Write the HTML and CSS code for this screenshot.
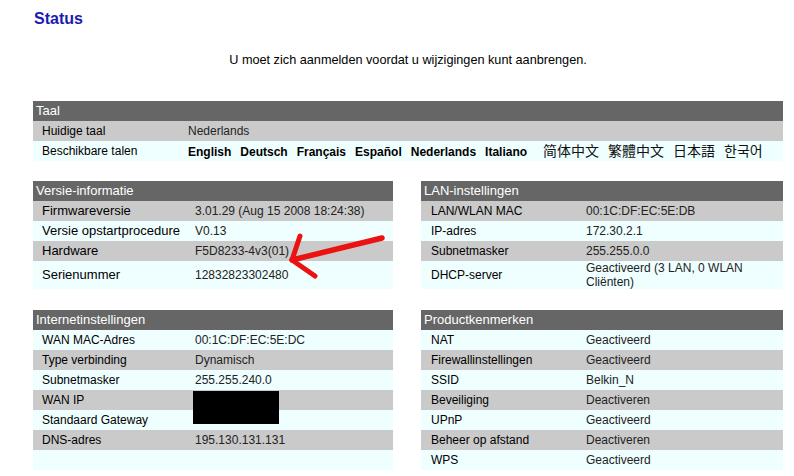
FILE: index.html
```html
<!DOCTYPE html>
<html lang="nl">
<head>
    <meta charset="UTF-8">
    <title>Status</title>
    <link rel="stylesheet" href="styles.css">
</head>
<body>

<div class="page">
    <h1 class="title">Status</h1>
    <p class="notice">U moet zich aanmelden voordat u wijzigingen kunt aanbrengen.</p>

    <table class="info info--lang">
        <tr><th colspan="2">Taal</th></tr>
        <tr class="alt"><td class="k">Huidige taal</td><td>Nederlands</td></tr>
        <tr>
            <td class="k">Beschikbare talen</td>
            <td>
                <div class="langs">
                    <b>English</b>
                    <b>Deutsch</b>
                    <b>Français</b>
                    <b>Español</b>
                    <b>Nederlands</b>
                    <b>Italiano</b>
                    <span class="cjk sc">简体中文</span>
                    <span class="cjk tc">繁體中文</span>
                    <span class="cjk jp">日本語</span>
                    <span class="cjk kr">한국어</span>
                </div>
            </td>
        </tr>
    </table>

    <div class="grid">
        <table class="info info--big">
            <tr><th colspan="2">Versie-informatie</th></tr>
            <tr class="alt"><td class="k">Firmwareversie</td><td>3.01.29 (Aug 15 2008 18:24:38)</td></tr>
            <tr><td class="k">Versie opstartprocedure</td><td>V0.13</td></tr>
            <tr class="alt"><td class="k">Hardware</td><td>F5D8233-4v3(01)</td></tr>
            <tr class="tall"><td class="k">Serienummer</td><td>12832823302480</td></tr>
        </table>

        <table class="info info--right">
            <tr><th colspan="2">LAN-instellingen</th></tr>
            <tr class="alt"><td class="k">LAN/WLAN MAC</td><td>00:1C:DF:EC:5E:DB</td></tr>
            <tr><td class="k">IP-adres</td><td>172.30.2.1</td></tr>
            <tr class="alt"><td class="k">Subnetmasker</td><td>255.255.0.0</td></tr>
            <tr class="tall"><td class="k">DHCP-server</td><td>Geactiveerd (3 LAN, 0 WLAN Cliënten)</td></tr>
        </table>

        <table class="info">
            <tr><th colspan="2">Internetinstellingen</th></tr>
            <tr><td class="k">WAN MAC-Adres</td><td>00:1C:DF:EC:5E:DC</td></tr>
            <tr class="alt"><td class="k">Type verbinding</td><td>Dynamisch</td></tr>
            <tr><td class="k">Subnetmasker</td><td>255.255.240.0</td></tr>
            <tr class="alt"><td class="k">WAN IP</td><td class="hidden"><span class="redact"></span></td></tr>
            <tr><td class="k">Standaard Gateway</td><td></td></tr>
            <tr class="alt"><td class="k">DNS-adres</td><td>195.130.131.131</td></tr>
            <tr><td class="k"></td><td></td></tr>
        </table>

        <table class="info info--right">
            <tr><th colspan="2">Productkenmerken</th></tr>
            <tr><td class="k">NAT</td><td>Geactiveerd</td></tr>
            <tr class="alt"><td class="k">Firewallinstellingen</td><td>Geactiveerd</td></tr>
            <tr><td class="k">SSID</td><td>Belkin_N</td></tr>
            <tr class="alt"><td class="k">Beveiliging</td><td>Deactiveren</td></tr>
            <tr><td class="k">UPnP</td><td>Geactiveerd</td></tr>
            <tr class="alt"><td class="k">Beheer op afstand</td><td>Deactiveren</td></tr>
            <tr><td class="k">WPS</td><td>Geactiveerd</td></tr>
        </table>
    </div>

    <!-- hand drawn arrow on top of the screenshot -->
    <svg class="arrow" width="105" height="55" viewBox="0 0 105 55">
        <g fill="none" stroke="#ec1212" stroke-linecap="round" stroke-linejoin="round">
            <path d="M97 10 L7 32" stroke-width="5.5"/>
            <path d="M15 8 L7 32 L30 48" stroke-width="5"/>
        </g>
    </svg>
</div>

</body>
</html>
```

FILE: styles.css
```css
* {
    box-sizing: border-box;
}
body {
    margin: 0;
    font-family: "Liberation Sans", Arial, sans-serif;
    font-size: 12px;
    color: #000;
    background-color: #fff;
}
.page {
    position: relative;
    width: 794px;
    padding: 0 11px 0 33px;
}
.title {
    margin: 10px 0 0 1px;
    font-size: 16px;
    line-height: 18px;
    font-weight: bold;
    color: #1b1bb4;
}
.notice {
    margin: 25px 0 0;
    text-align: center;
    font-size: 12.7px;
    line-height: 14px;
    color: #000;
}

/* tables */
.info {
    width: 100%;
    border-collapse: collapse;
    border-spacing: 0;
}
.info--lang {
    margin-top: 34px;
}
.info th {
    height: 20px;
    padding: 0 0 0 3px;
    text-align: left;
    font-size: 13px;
    font-weight: normal;
    line-height: 20px;
    color: #fff;
    background-color: #666;
}
.info td {
    height: 20px;
    padding: 0 4px 0 0;
    line-height: 14px;
    color: #222;
    background-color: #effefe;
    vertical-align: middle;
}
.info tr.alt td {
    background-color: #cacaca;
}
.info tr.tall td {
    height: 28px;
}
.info td.k {
    width: 162px;
    padding-left: 9px;
    color: #000;
}
.info--lang td.k {
    width: 155px;
}
.info--right td.k {
    width: 165px;
    padding-left: 10px;
}
.info--big td.k {
    font-size: 13px;
}

.langs {
    display: flex;
    align-items: baseline;
    gap: 9px;
    line-height: 14px;
}
.langs b {
    color: #000;
}
.cjk {
    font-size: 14px;
    color: #111;
}
.sc { font-family: "Noto Sans CJK SC", sans-serif; margin-left: 7px; }
.tc { font-family: "Noto Sans CJK TC", sans-serif; }
.jp { font-family: "Noto Sans CJK JP", sans-serif; }
.kr { font-family: "Noto Sans CJK KR", sans-serif; }

.grid {
    display: grid;
    grid-template-columns: 360px 362px;
    column-gap: 28px;
    row-gap: 21px;
    margin-top: 20px;
}

.hidden {
    position: relative;
}
.redact {
    position: absolute;
    left: -2px;
    top: 1px;
    width: 86px;
    height: 33px;
    background-color: #000;
}

.arrow {
    position: absolute;
    left: 285px;
    top: 218px;
}
```
